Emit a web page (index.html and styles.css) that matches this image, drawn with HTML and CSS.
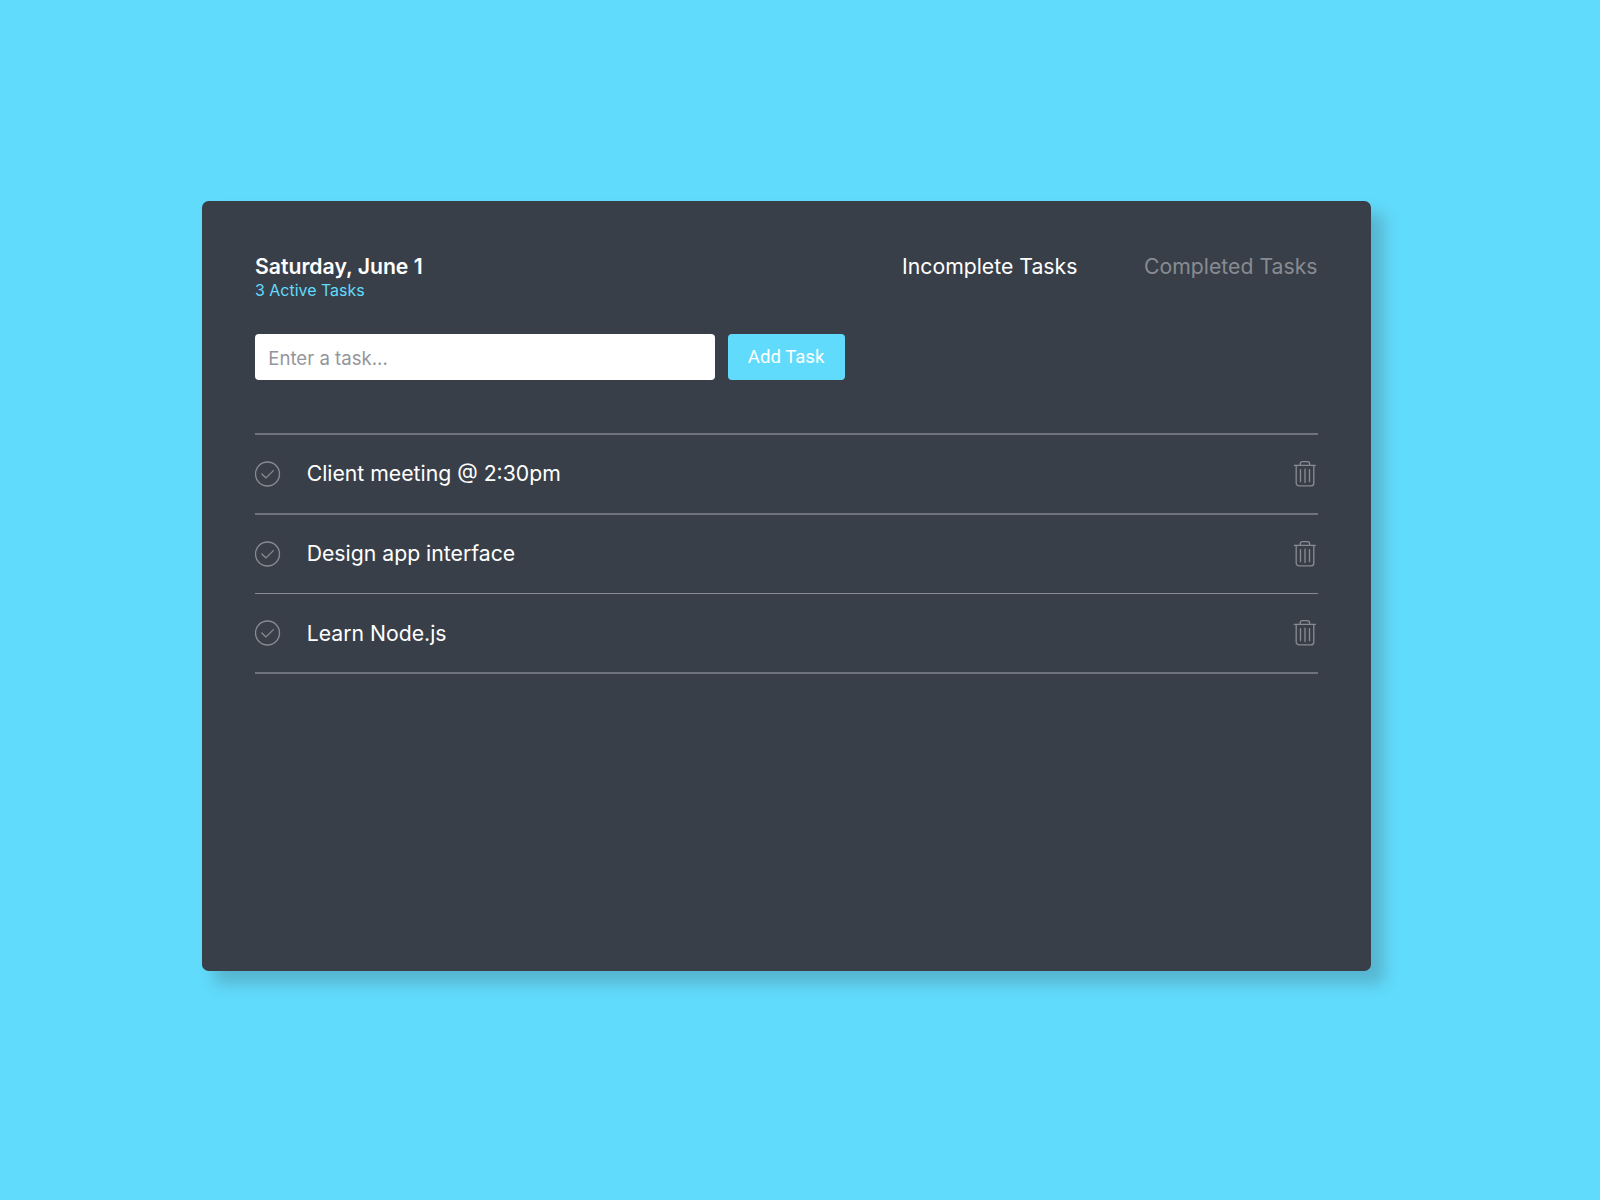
FILE: index.html
```html
<!DOCTYPE html>
<html lang="en">
<head>
<meta charset="utf-8">
<title>Tasks</title>
<link rel="stylesheet" href="styles.css">
</head>
<body>
<svg class="defs" width="0" height="0" aria-hidden="true">
  <symbol id="check" viewBox="0 0 26 26"><circle cx="12.5" cy="13" r="12"/><path d="M6.9 12.9l4.1 4 7.4-7.3"/></symbol>
  <symbol id="trash" viewBox="0 0 24 28"><path d="M1.3 5.3h21.1M7.2 5V3.8a2.2 2.2 0 0 1 2.2-2.2h5a2.2 2.2 0 0 1 2.2 2.2V5M3.2 5.3v17.6a3 3 0 0 0 3 3h11.6a3 3 0 0 0 3-3V5.3M7.5 9.7v11.8M12 9.2v13.2M16.5 9.7v11.8"/></symbol>
</svg>
<main class="card">
  <header class="header">
    <div>
      <h1 class="date">Saturday, June 1</h1>
      <p class="count">3 Active Tasks</p>
    </div>
    <nav class="tabs">
      <span class="tab active">Incomplete Tasks</span>
      <span class="tab">Completed Tasks</span>
    </nav>
  </header>
  <form class="form">
    <input class="field" type="text" placeholder="Enter a task...">
    <button class="add" type="button">Add Task</button>
  </form>
  <ul class="list">
    <li class="task"><svg class="check"><use href="#check"/></svg><span class="name">Client meeting @ 2:30pm</span><svg class="trash"><use href="#trash"/></svg></li>
    <li class="task"><svg class="check"><use href="#check"/></svg><span class="name">Design app interface</span><svg class="trash"><use href="#trash"/></svg></li>
    <li class="task"><svg class="check"><use href="#check"/></svg><span class="name">Learn Node.js</span><svg class="trash"><use href="#trash"/></svg></li>
  </ul>
</main>
</body>
</html>
```
FILE: styles.css
```css
* { box-sizing: border-box; margin: 0; padding: 0; }
body {
  height: 1200px;
  padding: 201px 0 0 202px;
  overflow: hidden;
  background: #61dbfb;
  font-family: Inter, "Liberation Sans", sans-serif;
  font-size: 21.22px;
  color: #fff;
}
.defs { display: block; height: 0; }
.card {
  width: 1168.5px;
  height: 770.2px;
  padding: 52px 53px;
  border-radius: 6.6px;
  background: #393f49;
  box-shadow: 12.6px 12.6px 15px rgba(57, 62, 72, .24);
}
.header { display: flex; justify-content: space-between; height: 81px; }
.date { font-size: 21.2px; font-weight: 600; line-height: 26px; }
.count { padding-top: 1px; font-size: 15.94px; line-height: 21px; color: #61dbfb; }
.tabs { display: flex; gap: 66.6px; line-height: 26px; }
.tab { color: #888b91; }
.active { color: #fff; }
.form { display: flex; gap: 13px; height: 46.4px; margin-bottom: 52.6px; }
.field {
  width: 459.6px;
  padding: 1px 13.3px 0;
  border: 0;
  border-radius: 4px;
  background: #fff;
  font: 18.6px Inter, sans-serif;
}
.field::placeholder { color: #94959a; }
.add {
  width: 117px;
  padding-bottom: 1px;
  border: 0;
  border-radius: 4px;
  background: #61dbfb;
  color: #fff;
  font: 18.6px Roboto, sans-serif;
}
.list { list-style: none; border-top: 2px solid #6f737b; }
.task { display: flex; align-items: center; height: 80px; border-bottom: 2px solid #6f737b; }
.task:nth-child(2) { height: 79px; border-bottom: 1px solid #888b91; }
.name { padding-bottom: 2px; }
.task:last-child .name { padding-bottom: 0; }
.check { width: 26px; height: 26px; margin-right: 25.7px; }
.check, .trash { fill: none; stroke: #888b91; stroke-width: 1.33; stroke-linecap: round; stroke-linejoin: round; }
.trash { width: 24px; height: 28px; margin: 0 .8px 0 auto; }
```
